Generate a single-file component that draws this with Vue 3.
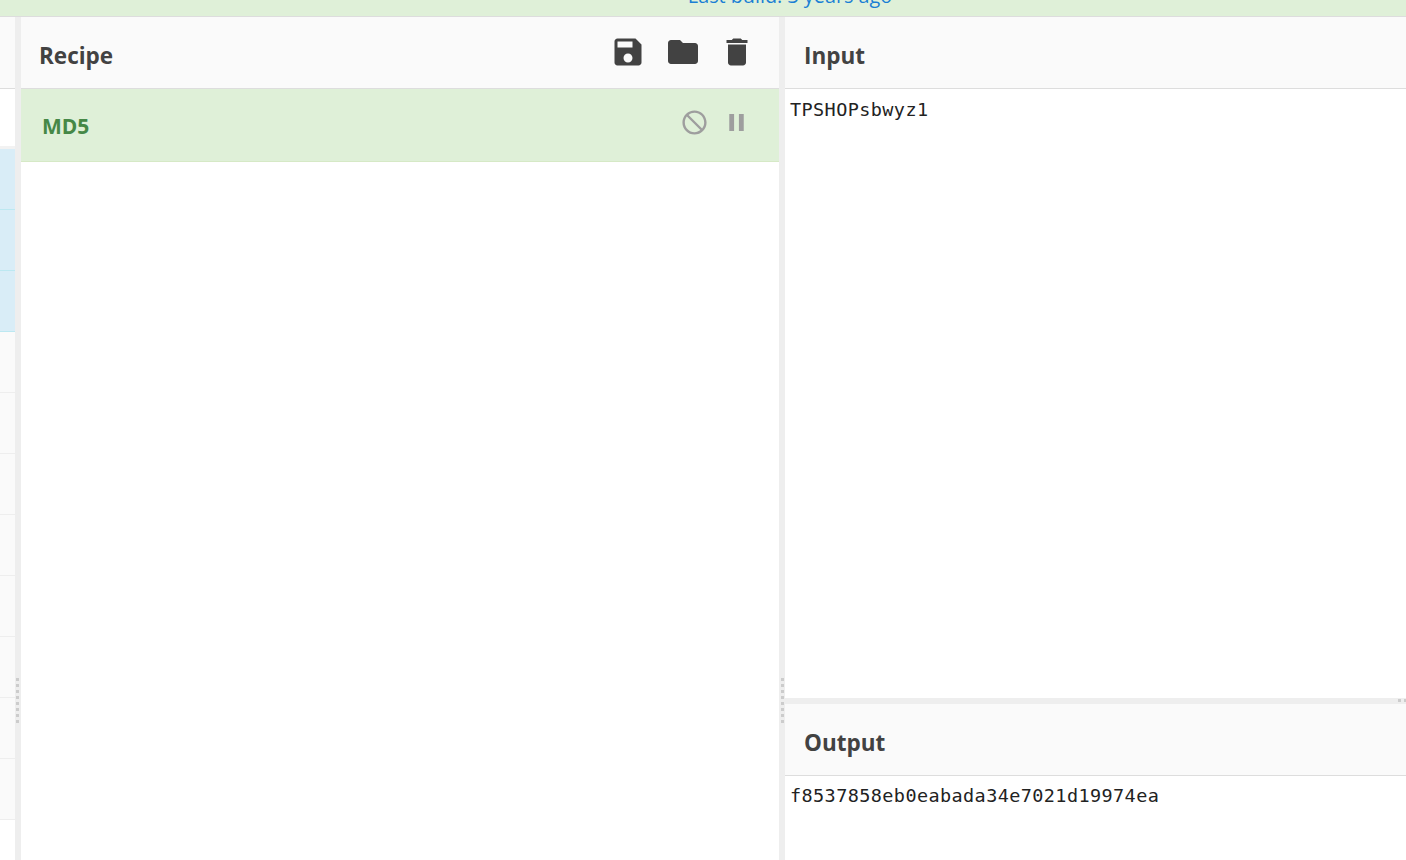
<script setup>
const blueRows = [0, 1, 2]
const greyRows = [0, 1, 2, 3, 4, 5, 6, 7]
</script>

<template>
  <div class="page">
    <div class="banner"><span>Last build: 3 years ago</span></div>
    <div class="main">
      <div class="ops">
        <div class="ops-head"></div>
        <div class="ops-white"></div>
        <div v-for="r in blueRows" :key="'b' + r" class="row blue"></div>
        <div v-for="r in greyRows" :key="'g' + r" class="row grey"></div>
      </div>
      <div class="gutter"><i class="dots"></i></div>
      <div class="recipe">
        <div class="head">
          <span class="title">Recipe</span>
          <div class="tools">
            <svg class="tool" viewBox="0 0 24 24"><path d="M17 3H5c-1.11 0-2 .9-2 2v14c0 1.1.89 2 2 2h14c1.1 0 2-.9 2-2V7l-4-4zm-5 16c-1.66 0-3-1.34-3-3s1.34-3 3-3 3 1.34 3 3-1.34 3-3 3zm3-10H5V5h10v4z"/></svg>
            <svg class="tool folder" viewBox="0 0 24 24"><path d="M10 4H4c-1.1 0-1.99.9-1.99 2L2 18c0 1.1.9 2 2 2h16c1.1 0 2-.9 2-2V8c0-1.1-.9-2-2-2h-8l-2-2z"/></svg>
            <svg class="tool" viewBox="0 0 24 24"><path d="M6 19c0 1.1.9 2 2 2h8c1.1 0 2-.9 2-2V7H6v12zM19 4h-3.5l-1-1h-5l-1 1H5v2h14V4z"/></svg>
          </div>
        </div>
        <div class="op">
          <span class="op-name">MD5</span>
          <div class="op-icons">
            <svg class="op-icon" viewBox="0 0 24 24"><path transform="matrix(-1 0 0 1 24 0)" d="M12 2C6.48 2 2 6.48 2 12s4.48 10 10 10 10-4.48 10-10S17.52 2 12 2zM4 12c0-4.42 3.58-8 8-8 1.85 0 3.55.63 4.9 1.69L5.69 16.9C4.63 15.55 4 13.85 4 12zm8 8c-1.85 0-3.55-.63-4.9-1.69L18.31 7.1C19.37 8.45 20 10.15 20 12c0 4.42-3.58 8-8 8z"/></svg>
            <svg class="op-icon" viewBox="0 0 24 24"><path d="M6 19h4V5H6v14zm8-14v14h4V5h-4z"/></svg>
          </div>
        </div>
      </div>
      <div class="gutter"><i class="dots second"></i></div>
      <div class="io">
        <div class="input">
          <div class="head"><span class="title">Input</span></div>
          <div class="text">TPSHOPsbwyz1</div>
        </div>
        <div class="hgutter"><i class="hdots"></i></div>
        <div class="output">
          <div class="head"><span class="title">Output</span></div>
          <div class="text out">f8537858eb0eabada34e7021d19974ea</div>
        </div>
      </div>
    </div>
  </div>
</template>

<style scoped>
.page {
  width: 1406px;
  height: 860px;
  overflow: hidden;
  display: flex;
  flex-direction: column;
  background: #fff;
  font-family: "Open Sans", "Noto Sans", sans-serif;
}
.banner {
  height: 16px;
  flex: none;
  background: #dff0d8;
  border-bottom: 1px solid #ddd;
  display: flex;
  justify-content: center;
  align-items: flex-start;
  overflow: hidden;
}
.banner span {
  color: #1a7fd4;
  font-size: 19.8px;
  line-height: 24px;
  margin-left: 174px;
  margin-top: -16px;
  flex: none;
}
.main {
  flex: 1;
  display: flex;
  min-height: 0;
}
.ops {
  width: 15px;
  flex: none;
  display: flex;
  flex-direction: column;
  overflow: hidden;
}
.ops-head {
  height: 71px;
  flex: none;
  background: #fafafa;
  border-bottom: 1px solid #ddd;
}
.ops-white {
  height: 57px;
  flex: none;
  background: #fff;
  border-bottom: 3px solid #f2f2f2;
}
.row {
  height: 60px;
  flex: none;
  border-bottom: 1px solid #eee;
}
.blue {
  background: #d9edf7;
  border-bottom-color: #bce8f1;
}
.grey {
  background: #fafafa;
}
.gutter {
  width: 6px;
  flex: none;
  background: #eee;
  position: relative;
}
.dots {
  position: absolute;
  left: 1px;
  top: 661px;
  width: 3px;
  height: 45px;
  background: repeating-linear-gradient(to bottom, #ccc 0 3px, transparent 3px 6px);
}
.dots.second {
  left: 2px;
}
.recipe {
  width: 758px;
  flex: none;
  display: flex;
  flex-direction: column;
}
.head {
  height: 71px;
  flex: none;
  background: #fafafa;
  border-bottom: 1px solid #ddd;
  display: flex;
  align-items: center;
  justify-content: space-between;
  padding-left: 18px;
  color: #424242;
}
.title {
  font-size: 22.5px;
  font-weight: 700;
  line-height: 1;
  margin-top: 7px;
}
.tools {
  display: flex;
  padding-right: 24px;
  gap: 18px;
  align-self: flex-start;
  padding-top: 17px;
}
.tool {
  width: 36px;
  height: 36px;
  fill: #424242;
}
.folder {
  margin-left: 1px;
}
.op {
  height: 72px;
  flex: none;
  background: #dff0d8;
  border-bottom: 1px solid #d6e9c6;
  display: flex;
  justify-content: space-between;
  padding-left: 21px;
  padding-right: 28px;
}
.op-name {
  color: #468847;
  font-size: 21px;
  font-weight: 700;
  line-height: 75px;
}
.op-icons {
  display: flex;
  gap: 13px;
  padding-top: 19px;
}
.op-icon {
  width: 29px;
  height: 29px;
  fill: #9e9e9e;
}
.io {
  flex: 1;
  min-width: 0;
  display: flex;
  flex-direction: column;
}
.input {
  height: 681px;
  flex: none;
}
.output {
  flex: 1;
}
.io .head {
  padding-left: 19px;
}
.text {
  font-family: "DejaVu Sans Mono", monospace;
  font-size: 18.5px;
  letter-spacing: 0.4px;
  line-height: 22px;
  color: #222;
  padding: 10px 5px;
}
.text.out {
  padding-top: 9px;
}
.hgutter {
  height: 6px;
  flex: none;
  background: #eee;
  position: relative;
}
.hdots {
  position: absolute;
  left: 613px;
  top: 1px;
  width: 45px;
  height: 3px;
  background: repeating-linear-gradient(to right, #ccc 0 3px, transparent 3px 6px);
}
</style>
